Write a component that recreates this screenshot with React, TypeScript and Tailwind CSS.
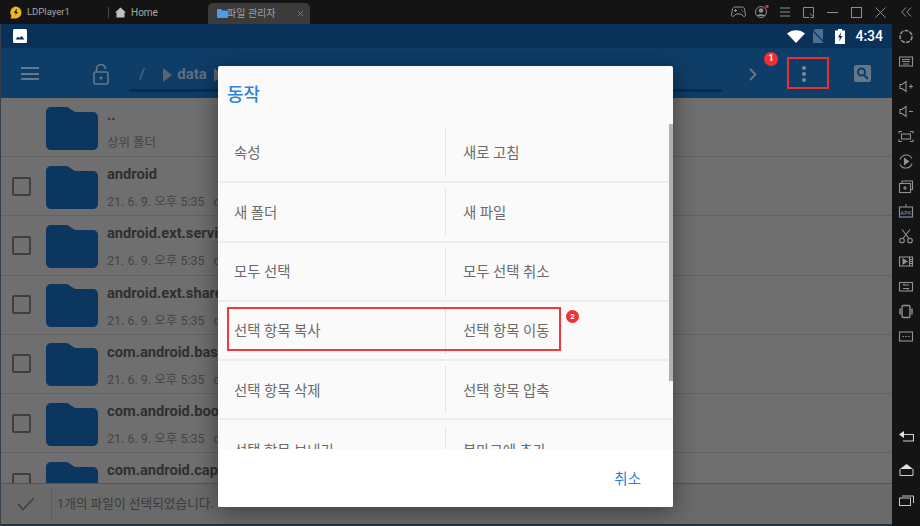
import { X } from 'lucide-react';

const sans = "font-['Roboto','Noto_Sans_CJK_KR',sans-serif]";

const files = [
  { name: '..', meta: '상위 폴더', perm: '', check: false },
  { name: 'android', meta: '21. 6. 9. 오후 5:35', perm: 'drwx', check: true },
  { name: 'android.ext.services', meta: '21. 6. 9. 오후 5:35', perm: 'drwx', check: true },
  { name: 'android.ext.shared', meta: '21. 6. 9. 오후 5:35', perm: 'drwx', check: true },
  { name: 'com.android.basicsmsreceiver', meta: '21. 6. 9. 오후 5:35', perm: 'drwx', check: true },
  { name: 'com.android.bookmarkprovider', meta: '21. 6. 9. 오후 5:35', perm: 'drwx', check: true },
  // last row runs under the bottom bar, only the name shows
  { name: 'com.android.captiveportallogin', meta: '', perm: '', check: true },
];

const actions = [
  ['속성', '새로 고침'],
  ['새 폴더', '새 파일'],
  ['모두 선택', '모두 선택 취소'],
  ['선택 항목 복사', '선택 항목 이동'],
  ['선택 항목 삭제', '선택 항목 압축'],
  ['선택 항목 보내기', '북마크에 추가'],
];

const Folder = () => (
  <svg width="52" height="43" viewBox="0 0 52 43" className="shrink-0">
    <path d="M5 0h15c2 0 3 .8 4.200 2L29 5h18c2.800 0 5 2.200 5 5v28c0 2.800-2.200 5-5 5H5c-2.800 0-5-2.200-5-5V5c0-2.800 2.200-5 5-5z" fill="#0a3660" />
  </svg>
);

const Side = ({ children }: { children: React.ReactNode }) => (
  <svg width="16" height="25" viewBox="0 0 16 25" fill="none" stroke="#929292" strokeWidth="1.100">
    {children}
  </svg>
);

const TitleBar = () => (
  <div className="h-6 shrink-0 bg-[#141414] flex items-end text-[#a8a8a8] text-[9.500px]">
    <div className="w-[108px] h-6 flex items-center pl-[9px] gap-[5px] pt-[1px]">
      <svg width="13" height="13" viewBox="0 0 13 13">
        <path d="M6.500 0.500a6 6 0 0 1 6 6 6 6 0 0 1-6 6H1.500l1-2.500a6 6 0 0 1 4-9.500z" fill="#f2b51d" />
        <path d="M7 3.500L5 7h2l-1 2.500L9 6H7.300L8 3.500z" fill="#141414" />
      </svg>
      <span>LDPlayer1</span>
    </div>
    <div className="h-6 flex items-center pt-[1px]">
      <div className="w-px h-[11px] bg-[#4a4a4a]" />
      <svg width="11" height="11" viewBox="0 0 11 11" className="ml-[6px]">
        <path d="M5.500 0.500L11 5.500H9.500V10.500H1.500V5.500H0z" fill="#c0c0c0" />
      </svg>
      <span className="ml-[5px] w-[77px] text-[10px]">Home</span>
    </div>
    <div className="w-[102px] h-[21px] bg-[#3b3b3b] rounded-t-[5px] flex items-center pl-[9px] text-[10px] text-[#a0a0a0]">
      <svg width="11" height="9" viewBox="0 0 11 9">
        <path d="M0 1a1 1 0 0 1 1-1h3l1 1.500h5a1 1 0 0 1 1 1V8a1 1 0 0 1-1 1H1a1 1 0 0 1-1-1z" fill="#4a9be8" />
      </svg>
      <span className="-ml-px flex-1">파일 관리자</span>
      <X size={9} className="mr-[5px] text-[#8a8a8a]" />
    </div>
    <div className="flex-1 h-6 flex items-center justify-end">
      <div className="flex items-center w-[190px]">
        <svg width="15" height="12" viewBox="0 0 15 12" fill="none" stroke="#8e8e8e" className="ml-[1px]">
          <path d="M3.500 1h8c1 0 1.500.6 2 2l1 6c.2 1.500-1.500 2-2.500 1L10 8H5l-2 2c-1 1-2.700.5-2.500-1l1-6c.5-1.400 1-2 2-2z" />
          <path d="M3 4.500h3M4.500 3v3M10 4h.8M11.500 5.500h.8" />
        </svg>
        <svg width="14" height="14" viewBox="0 0 14 14" className="ml-[9px]">
          <circle cx="6" cy="7" r="5.500" fill="none" stroke="#8e8e8e" />
          <circle cx="6" cy="5.500" r="2.300" fill="#8e8e8e" />
          <path d="M1.800 11c.8-2.500 7.600-2.500 8.400 0" fill="#8e8e8e" />
          <circle cx="12" cy="1.500" r="1.700" fill="#e03030" />
        </svg>
        <svg width="10" height="10" viewBox="0 0 10 10" stroke="#8e8e8e" className="ml-[11px]">
          <path d="M0 1h10M0 5h10M0 9h10" />
        </svg>
        <svg width="11" height="11" viewBox="0 0 11 11" fill="none" stroke="#8e8e8e" className="ml-[13px]">
          <path d="M6 10.500H.5V.5h10v6" />
          <path d="M7 6.500l3 3M10.500 7v3.500H7.500" />
        </svg>
        <svg width="11" height="11" viewBox="0 0 11 11" stroke="#8e8e8e" className="ml-[13px]">
          <path d="M0 5.500h11" />
        </svg>
        <svg width="11" height="11" viewBox="0 0 11 11" fill="none" stroke="#8e8e8e" className="ml-[13px]">
          <rect x=".5" y=".5" width="10" height="10" />
        </svg>
        <svg width="11" height="11" viewBox="0 0 11 11" stroke="#8e8e8e" className="ml-[13px]">
          <path d="M.5.500l10 10M10.500.500l-10 10" />
        </svg>
        <svg width="11" height="10" viewBox="0 0 11 10" fill="none" stroke="#8e8e8e" className="ml-[15px]">
          <path d="M5 .5L.8 5 5 9.500M10 .5L5.800 5 10 9.500" />
        </svg>
      </div>
    </div>
  </div>
);

const StatusBar = () => (
  <div className="h-6 shrink-0 bg-[#0a3158] flex items-center pl-[12px] pr-[9px]">
    <svg width="14" height="14" viewBox="0 0 14 14">
      <rect width="14" height="14" rx="1.500" fill="#fff" />
      <path d="M2.500 10.500L5 7.500l1.500 1.500L8.500 7l3 3.500z" fill="#0a3158" />
    </svg>
    <div className="flex-1" />
    <svg width="18" height="13" viewBox="0 0 18 13">
      <path d="M0 3.500C5-1 13-1 18 3.500L9 13z" fill="#fff" />
    </svg>
    <svg width="12" height="14" viewBox="0 0 12 14" className="ml-[7px]">
      <path d="M3 0h8v14H1V2.500z" fill="#4d6f92" />
      <path d="M0 1l12 12" stroke="#0a3158" strokeWidth="1.200" />
    </svg>
    <svg width="10" height="15" viewBox="0 0 10 15" className="ml-[11px]">
      <path d="M3 0h4v1.500h3V15H0V1.500h3z" fill="#fff" />
      <path d="M6 3L3 8.500h2L4 12.500 7.500 7H5.500z" fill="#0a3158" />
    </svg>
    <span className={`ml-[10px] text-white text-[14px] font-medium ${sans}`}>4:34</span>
  </div>
);

const ToolBar = () => (
  <div className="h-[50px] shrink-0 bg-[#0e3d68] flex items-start text-[#5e6f7f] relative">
    <div className="ml-[20px] mt-[19px] w-[18px] flex flex-col gap-[3.500px]">
      <div className="h-[2px] bg-[#65788a]" />
      <div className="h-[2px] bg-[#65788a]" />
      <div className="h-[2px] bg-[#65788a]" />
    </div>
    <svg width="16" height="21" viewBox="0 0 16 21" fill="none" stroke="#65788a" strokeWidth="1.600" className="ml-[54px] mt-[16px]">
      <rect x="1" y="8" width="14" height="12" rx="1.500" />
      <path d="M3.500 8V5a4.500 4.500 0 0 1 9 0" />
      <circle cx="8" cy="14" r="1.500" fill="#65788a" stroke="none" />
    </svg>
    <div className={`ml-[30px] mt-[16px] flex items-center h-[21px] font-bold text-[15px] w-[480px] ${sans}`}>
      <span className="font-normal">/</span>
      <svg width="9" height="14" viewBox="0 0 9 14" className="ml-[18px]"><path d="M0 0l9 7-9 7z" fill="#5a6470" /></svg>
      <span className="ml-[5px]">data</span>
      <svg width="9" height="14" viewBox="0 0 9 14" className="ml-[7px]"><path d="M0 0l9 7-9 7z" fill="#5a6470" /></svg>
    </div>
    <svg width="8" height="13" viewBox="0 0 8 13" fill="none" stroke="#65788a" strokeWidth="1.800" className="ml-[130px] mt-[20px]">
      <path d="M1 1l5.500 5.500L1 12" />
    </svg>
    <div className="ml-[45px] mt-[18px] flex flex-col gap-[2px]">
      <div className="size-[4px] rounded-full bg-[#7c8a97]" />
      <div className="size-[4px] rounded-full bg-[#7c8a97]" />
      <div className="size-[4px] rounded-full bg-[#7c8a97]" />
    </div>
    <svg width="17" height="17" viewBox="0 0 17 17" className="ml-[48px] mt-[17px]">
      <rect width="17" height="17" rx="2" fill="#65788a" />
      <circle cx="7.500" cy="7" r="3.500" fill="none" stroke="#0e3d68" strokeWidth="2" />
      <path d="M10 10l4 4" stroke="#0e3d68" strokeWidth="2.200" />
    </svg>
    <div className="absolute left-[128px] top-[41px] w-[593px] h-[3px] bg-[#0a2b4b]" />
  </div>
);

const FileRow = ({ name, meta, perm, check }: (typeof files)[number]) => (
  <div className="h-[59.200px] shrink-0 flex items-center border-b border-[#626262] pl-[11px]">
    {check ? <div className="size-[19px] rounded-[2px] border-2 border-[#3f3f3f]" /> : <div className="size-[19px]" />}
    <div className="ml-[15px] mt-[2px]"><Folder /></div>
    <div className="ml-[9px] pt-[3px] whitespace-nowrap">
      <div className="text-[14.700px] leading-[20px] text-[#303030] font-bold">{name}</div>
      <div className="mt-[9px] h-[18px] text-[12.500px] leading-[18px] text-[#444444]">
        {meta}
        {perm && <span className="ml-[9px]">{perm}</span>}
      </div>
    </div>
  </div>
);

const Dialog = () => (
  <div className={`absolute left-[217px] top-[42px] w-[455px] h-[441px] bg-[#fafafa] rounded-[2px] shadow-[0_4px_24px_rgba(0,0,0,0.45)] flex flex-col overflow-hidden ${sans}`}>
    <div className="h-[58px] shrink-0 pl-[9px] pt-[17px] text-[#2a82dc] text-[18px] leading-[24px] font-medium">동작</div>
    <div className="flex-1 overflow-hidden relative">
      {actions.map(([a, b], i) => (
        <div key={a} className={`h-[59.300px] grid grid-cols-[227px_1fr] items-center text-[14.400px] text-[#6b6b6b] ${i < 5 ? 'border-b-2 border-[#ededed]' : ''}`}>
          <div className="pl-[16px] pt-[3px]">{a}</div>
          <div className="border-l border-[#e4e4e4] h-[47px] flex items-center pl-[17px] pt-[3px]">{b}</div>
        </div>
      ))}
      <div className="absolute right-0 top-0 w-[4px] h-[257px] bg-[#b0b0b0]" />
    </div>
    <div className="h-[58px] shrink-0 bg-white flex items-center justify-end pr-[32px] pt-[3px] text-[#2a82dc] text-[14.500px]">취소</div>
  </div>
);

const SideBar = () => (
  <div className="w-7 shrink-0 bg-[#141414] flex flex-col items-center">
    <Side><circle cx="8" cy="12.500" r="6" strokeWidth="1.600" strokeDasharray="4 1.200" /></Side>
    <Side><rect x="1.500" y="8" width="13" height="9" /><path d="M4 10.500h8M4 12.500h8M5 15h6" /></Side>
    <Side><path d="M2 10.500v4h2l4 3v-10l-4 3zM11 12.500h4M13 10.500v4" /></Side>
    <Side><path d="M2 10.500v4h2l4 3v-10l-4 3zM11 12.500h4" /></Side>
    <Side><path d="M1 9.500v-2h3M12 7.500h3v2M15 15.500v2h-3M4 17.500H1v-2" /><rect x="3.500" y="10" width="9" height="5" /></Side>
    <Side><path d="M2 10.500a6.500 6.500 0 0 1 12-1M14 14.500a6.500 6.500 0 0 1-12 1" /><path d="M6.500 9.500l4 3-4 3z" fill="#929292" /></Side>
    <Side><rect x="1.500" y="9.500" width="11" height="9" /><path d="M4 9.500V7h10.500v8.500H13M5 14h4M7 12v4" /></Side>
    <Side><rect x="1.500" y="8" width="13" height="10" /><path d="M8 5v3" /><text x="8" y="15.500" fontSize="6" fill="#929292" stroke="none" textAnchor="middle">APK</text></Side>
    <Side><circle cx="4" cy="16.500" r="2.300" /><circle cx="12" cy="16.500" r="2.300" /><path d="M5 14.500L12 5.500M11 14.500L4 5.500" /></Side>
    <Side><rect x="1.500" y="8" width="13" height="9" /><path d="M5 10l4 2.500L5 15z" fill="#929292" /><path d="M11.500 8v9M11.500 10.500h3M11.500 12.500h3M11.500 14.500h3" /></Side>
    <Side><rect x="1.500" y="8.500" width="13" height="8.500" /><path d="M5 11h6M5 14.500h6M5 11l1.500-1M11 14.500l-1.500 1" /></Side>
    <Side><rect x="4" y="6.500" width="8" height="12" rx="1.500" strokeWidth="1.400" /><path d="M2 9.500v6M14 9.500v6" strokeWidth="1.400" /></Side>
    <Side><rect x="1.500" y="8" width="13" height="9" /><path d="M4.500 12.500h1.500M7.300 12.500h1.500M10 12.500h1.500" /></Side>
    <div className="flex-1" />
    <svg width="15" height="12" viewBox="0 0 15 12" fill="none" className="mb-[21px]">
      <path d="M0 3.500L5 0v7z" fill="#e0e0e0" />
      <path d="M5 3.500h9.500V10H4" stroke="#d0d0d0" strokeWidth="1.200" />
    </svg>
    <svg width="15" height="12" viewBox="0 0 15 12" fill="none" className="mb-[19px]">
      <path d="M1 5L7.500 0 14 5z" fill="#e0e0e0" />
      <path d="M1 5v6.500h13V5" stroke="#d0d0d0" />
    </svg>
    <svg width="15" height="11" viewBox="0 0 15 11" fill="none" stroke="#c8c8c8" className="mb-[20px]">
      <rect x=".5" y="3" width="11" height="7.500" />
      <path d="M3 1h11.500v7" />
    </svg>
  </div>
);

const App = () => {
  return (
    <div className={`w-[920px] h-[526px] overflow-hidden flex flex-col bg-[#141414] ${sans}`}>
      <TitleBar />
      <div className="flex-1 flex min-h-0">
        <div className="flex-1 relative flex flex-col min-w-0 border-l border-[#34404c]">
          <StatusBar />
          <ToolBar />
          <div className="flex-1 bg-[#6f6f6f] overflow-hidden flex flex-col min-h-0">
            {files.map((f) => (
              <FileRow key={f.name} {...f} />
            ))}
          </div>
          <div className="h-[41px] shrink-0 bg-[#6a6a6a] border-t border-[#2f6078] flex items-center pl-[16px] text-[12.700px] text-[#3a3a3a]">
            <svg width="18" height="14" viewBox="0 0 18 14" fill="none" stroke="#3c3c3c" strokeWidth="1.500">
              <path d="M1 7l5 5.500L17 1" />
            </svg>
            <div className="ml-[16px] mr-[5px] w-px h-[32px] bg-[#5c5c5c]" />
            <span>1개의 파일이 선택되었습니다.</span>
          </div>
          <div className="h-[2px] shrink-0 bg-[#26333f]" />
          <Dialog />
          {/* callouts from the guide */}
          <div className="absolute left-[786px] top-[33px] w-[42px] h-[32px] border-2 border-[#e8302f]" />
          <div className="absolute left-[763px] top-[28px] size-[14px] rounded-full bg-[#f23030] text-white text-[9px] font-bold flex items-center justify-center">1</div>
          <div className="absolute left-[226px] top-[283px] w-[334px] h-[44px] border-2 border-[#f0393a]" />
          <div className="absolute left-[565px] top-[286px] size-[13px] rounded-full bg-[#f23030] text-white text-[8px] font-bold flex items-center justify-center">2</div>
        </div>
        <SideBar />
      </div>
    </div>
  );
};

export default App;
